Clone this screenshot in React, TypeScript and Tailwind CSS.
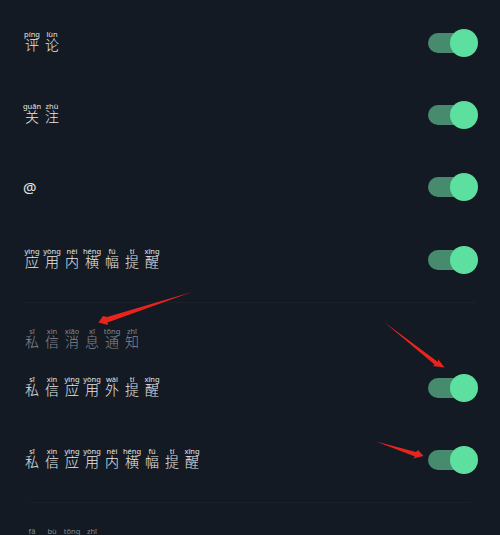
const R1: [string, string][] = [["píng", "评"], ["lùn", "论"]];
const R2: [string, string][] = [["guān", "关"], ["zhù", "注"]];
const R4: [string, string][] = [["yìng", "应"], ["yòng", "用"], ["nèi", "内"], ["héng", "横"], ["fú", "幅"], ["tí", "提"], ["xǐng", "醒"]];
const T: [string, string][] = [["sī", "私"], ["xìn", "信"], ["xiāo", "消"], ["xī", "息"], ["tōng", "通"], ["zhī", "知"]];
const R5: [string, string][] = [["sī", "私"], ["xìn", "信"], ["yìng", "应"], ["yòng", "用"], ["wài", "外"], ["tí", "提"], ["xǐng", "醒"]];
const R6: [string, string][] = [["sī", "私"], ["xìn", "信"], ["yìng", "应"], ["yòng", "用"], ["nèi", "内"], ["héng", "横"], ["fú", "幅"], ["tí", "提"], ["xǐng", "醒"]];
const B: [string, string][] = [["fā", "发"], ["bù", "布"], ["tōng", "通"], ["zhī", "知"]];

function Py({ items, dim }: { items: [string, string][]; dim?: boolean }) {
  return (
    <div className={dim ? "flex text-[#85888e]" : "flex text-[#e6e6e6]"}>
      {items.map(([p, c], i) => (
        <div key={i} className="flex w-5 flex-col items-center">
          <span className="h-2 whitespace-nowrap text-[7.5px] leading-[8px]">{p}</span>
          <span className="h-[14px] text-[14px] font-light leading-[14px]">{c}</span>
        </div>
      ))}
    </div>
  );
}

function Toggle() {
  return (
    <div className="flex items-center">
      <div className="h-5 w-[42px] rounded-full bg-[#478b6e]" />
      <div className="-ml-5 h-7 w-7 rounded-full bg-[#5de09f]" />
    </div>
  );
}

function Row({ children }: { children: React.ReactNode }) {
  return (
    <div className="flex h-[72px] items-center justify-between pl-[22px] pr-[22px]">
      <div className="-mt-1">{children}</div>
      <Toggle />
    </div>
  );
}

export default function App() {
  return (
    <div className="relative h-[535px] w-[500px] overflow-hidden bg-[#141a23] font-['Noto_Sans','Noto_Sans_CJK_SC',sans-serif]">
      <div className="pt-[7px]">
        <Row><Py items={R1} /></Row>
        <Row><Py items={R2} /></Row>
        <Row><div className="pl-[1px] pt-[4px] text-[15px] leading-5 text-[#e6e6e6]">@</div></Row>
        <div className="pt-px"><Row><Py items={R4} /></Row></div>
        <div className="mx-[25px] mt-[6px] h-px bg-[#1b212b]" />
        <div className="h-[49px] pl-[22px] pt-[24px]"><Py items={T} dim /></div>
        <Row><Py items={R5} /></Row>
        <Row><Py items={R6} /></Row>
        <div className="mx-[30px] mt-[6px] h-px bg-[#1b212b]" />
        <div className="pl-[22px] pt-[24px]"><Py items={B} dim /></div>
      </div>
      <svg className="absolute left-0 top-0" width="500" height="535" viewBox="0 0 500 535">
        <polygon points="192,292 107,317 103,316 98.5,322.5 108,325 107.5,322.5" fill="#e8241c" />
        <polygon points="384,322 438,362 438,359 444.5,367.5 433,366 434.5,364.5" fill="#e8241c" />
        <polygon points="376,441.5 416,452 418,450 423.5,456 413,458.5 415,456.5" fill="#e8241c" />
      </svg>
    </div>
  );
}
